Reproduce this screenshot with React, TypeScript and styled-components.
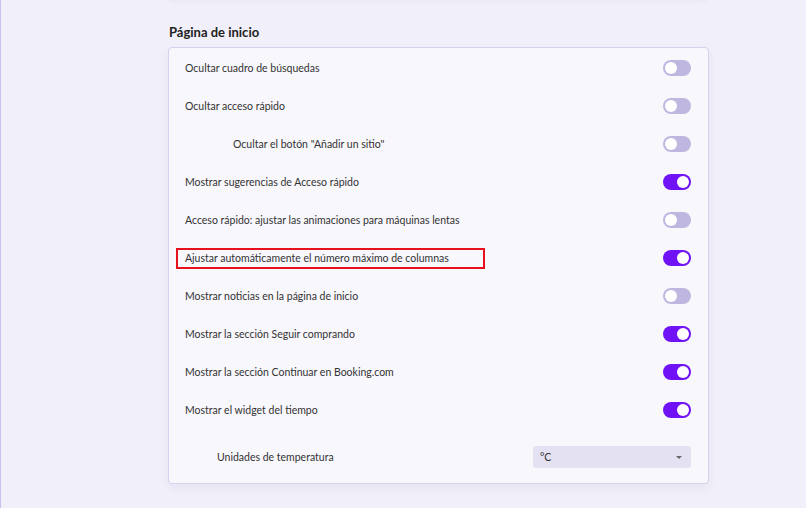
import React from "react";
import styled, { createGlobalStyle } from "styled-components";

const GlobalStyle = createGlobalStyle`
  html, body {
    margin: 0;
    padding: 0;
    background: #f1eff9;
    font-family: Lato, "Noto Sans", sans-serif;
  }
`;

const Page = styled.div`
  min-height: 508px;
  border-left: 1px solid #cbc3ee;
  box-sizing: border-box;
  overflow: hidden;
  padding-left: 167px;
`;

const Column = styled.div`
  width: 541px;
`;

const PrevCard = styled.div`
  height: 20px;
  margin-top: -22px;
  border-radius: 4px;
  background: #f3f1fa;
  box-shadow: 0 2px 6px rgba(70, 50, 140, 0.07);
`;

const SectionTitle = styled.h2`
  margin: 0;
  padding: 25px 0 0 1px;
  height: 24px;
  font-size: 13px;
  font-weight: 700;
  color: #222;
  line-height: 18px;
`;

const Card = styled.div`
  border: 1px solid #d6d1ec;
  border-radius: 4px;
  background: #f8f7fc;
  box-shadow: 0 4px 10px rgba(70, 50, 140, 0.06);
  padding-top: 1px;
`;

const Row = styled.div<{ $indent?: number; $tall?: boolean }>`
  display: flex;
  align-items: center;
  justify-content: space-between;
  height: ${(p) => (p.$tall ? "52px" : "38px")};
  padding: ${(p) => (p.$tall ? "2px" : "0")} 17px 0
    ${(p) => 16 + (p.$indent ?? 0)}px;
`;

const Label = styled.span<{ $marked?: boolean }>`
  position: relative;
  font-size: 10.5px;
  line-height: 14px;
  color: #333;

  ${(p) =>
    p.$marked &&
    `
    &::after {
      content: "";
      position: absolute;
      left: -9px;
      right: -36px;
      top: -3px;
      bottom: -4px;
      border: 2px solid #e8101c;
    }
  `}
`;

const Toggle = styled.span<{ $on?: boolean }>`
  position: relative;
  width: 28px;
  height: 16px;
  border-radius: 8px;
  background: ${(p) => (p.$on ? "#7012f6" : "#bfb7df")};
  flex-shrink: 0;

  &::after {
    content: "";
    position: absolute;
    top: 2px;
    left: ${(p) => (p.$on ? "14px" : "2px")};
    width: 12px;
    height: 12px;
    border-radius: 50%;
    background: #fff;
  }
`;

const Select = styled.div`
  display: flex;
  align-items: center;
  justify-content: space-between;
  width: 158px;
  height: 22px;
  box-sizing: border-box;
  padding: 0 9px 0 7px;
  border-radius: 3px;
  background: #e4e1f2;
  font-size: 10.5px;
  color: #333;
`;

const Caret = styled.span`
  width: 0;
  height: 0;
  border-left: 3px solid transparent;
  border-right: 3px solid transparent;
  border-top: 3px solid #666;
`;

type Setting = { label: string; on: boolean; indent?: number; marked?: boolean };

const settings: Setting[] = [
  { label: "Ocultar cuadro de búsquedas", on: false },
  { label: "Ocultar acceso rápido", on: false },
  { label: 'Ocultar el botón "Añadir un sitio"', on: false, indent: 48 },
  { label: "Mostrar sugerencias de Acceso rápido", on: true },
  { label: "Acceso rápido: ajustar las animaciones para máquinas lentas", on: false },
  { label: "Ajustar automáticamente el número máximo de columnas", on: true, marked: true },
  { label: "Mostrar noticias en la página de inicio", on: false },
  { label: "Mostrar la sección Seguir comprando", on: true },
  { label: "Mostrar la sección Continuar en Booking.com", on: true },
  { label: "Mostrar el widget del tiempo", on: true },
];

export default function App() {
  return (
    <>
      <GlobalStyle />
      <Page>
        <Column>
          <PrevCard />
          <SectionTitle>Página de inicio</SectionTitle>
          <Card>
            {settings.map((s) => (
              <Row key={s.label} $indent={s.indent}>
                <Label $marked={s.marked}>{s.label}</Label>
                <Toggle $on={s.on} />
              </Row>
            ))}
            <Row $tall $indent={32}>
              <Label>Unidades de temperatura</Label>
              <Select>
                °C
                <Caret />
              </Select>
            </Row>
          </Card>
        </Column>
      </Page>
    </>
  );
}
